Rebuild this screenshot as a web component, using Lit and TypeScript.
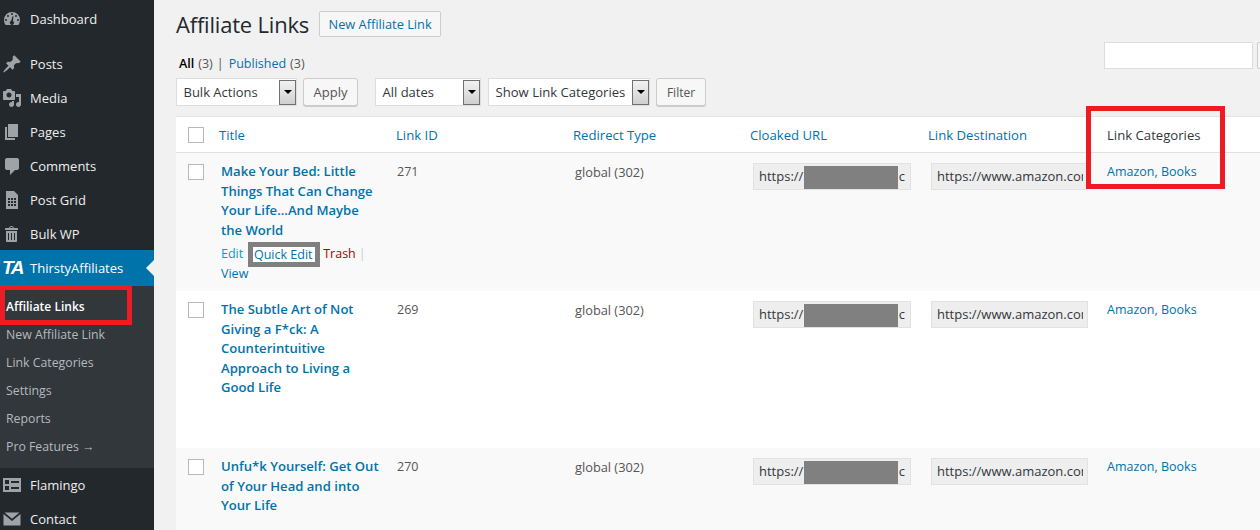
import { LitElement, html, css, svg } from "lit";
import { customElement } from "lit/decorators.js";

const icons: Record<string, unknown> = {
  dash: svg`<path fill-rule="evenodd" d="M3.76 16h12.48A7.97 7.97 0 0 0 18 11a8 8 0 0 0-16 0c0 1.9.66 3.64 1.76 5zM10 4a1 1 0 1 1 0 2 1 1 0 0 1 0-2zM6 6a1 1 0 1 1 0 2 1 1 0 0 1 0-2zm8 0a1 1 0 1 1 0 2 1 1 0 0 1 0-2zM4 10a1 1 0 1 1 0 2 1 1 0 0 1 0-2zm12 0a1 1 0 1 1 0 2 1 1 0 0 1 0-2zm-4.500-2.500L10.900 12.100a2 2 0 1 1-1.800-.1l1.400-4.800z"/>`,
  pin: svg`<path d="M10.44 3.02l1.82-1.82 6.36 6.35-1.83 1.82c-1.05-.68-2.48-.57-3.41.36l-.75.75c-.92.93-1.04 2.35-.35 3.41l-1.83 1.82-2.41-2.41-2.8 2.79c-.42.42-3.38 2.71-3.8 2.29s1.86-3.39 2.28-3.81l2.79-2.79L4.1 9.36l1.83-1.82c1.05.69 2.48.57 3.4-.36l.75-.75c.93-.92 1.05-2.35.36-3.41z"/>`,
  media: svg`<path fill-rule="evenodd" d="M13 11V4c0-.55-.45-1-1-1h-1.670L9 1H5L3.670 3H2c-.55 0-1 .45-1 1v7c0 .55.45 1 1 1h10c.55 0 1-.45 1-1zM7 4.500c1.380 0 2.500 1.120 2.500 2.500S8.380 9.500 7 9.500 4.500 8.380 4.500 7 5.620 4.500 7 4.500z"/><path d="M14 6h5v10.500c0 1.380-1.120 2.500-2.500 2.500S14 17.880 14 16.500s1.120-2.500 2.500-2.500c.17 0 .34.02.5.050V9h-3V6zm-4 8.050V13h2v3.500c0 1.380-1.120 2.500-2.500 2.500S7 17.880 7 16.500 8.120 14 9.500 14c.17 0 .34.02.5.050z"/>`,
  pages: svg`<path d="M6 15V2h10v13H6zm-1 1h8v2H3V5h2v11z"/>`,
  comment: svg`<path d="M5 2h10c1.100 0 2 .9 2 2v8c0 1.100-.9 2-2 2h-2l-5 5v-5H5c-1.100 0-2-.9-2-2V4c0-1.100.9-2 2-2z"/>`,
  grid: svg`<path fill-rule="evenodd" d="M4 1h8l4 4v14H4V1zm2 7v2h2V8H6zm3 0v2h2V8H9zm3 0v2h2V8h-2zm-6 3v2h2v-2H6zm3 0v2h2v-2H9zm3 0v2h2v-2h-2zm-6 3v2h2v-2H6zm3 0v2h2v-2H9zm3 0v2h2v-2h-2z"/>`,
  trash: svg`<path fill-rule="evenodd" d="M12 4h3c.6 0 1 .4 1 1v1H3V5c0-.6.5-1 1-1h3c.2-1.100 1.300-2 2.500-2s2.300.9 2.500 2zM8 4h3c-.2-.6-.9-1-1.500-1S8.200 3.400 8 4zM4 7h11v10c0 .6-.4 1-1 1H5c-.5 0-1-.4-1-1V7zm2 2v7h1V9H6zm3 0v7h1V9H9zm3 0v7h1V9h-1z"/>`,
  flamingo: svg`<path fill-rule="evenodd" d="M1 3h18v14H1V3zm2 2v4h4V5H3zm6 1v2h8V6H9zm-6 5v4h4v-4H3zm6 1v2h8v-2H9z"/>`,
  mail: svg`<path d="M2.500 3.500h15L10 9.800z"/><path d="M1.500 5l8.500 7 8.500-7v11.500h-17z"/>`,
};

const menuTop = [
  { t: "Posts", i: "pin" },
  { t: "Media", i: "media" },
  { t: "Pages", i: "pages" },
  { t: "Comments", i: "comment" },
  { t: "Post Grid", i: "grid" },
  { t: "Bulk WP", i: "trash" },
];
const subs = ["New Affiliate Link", "Link Categories", "Settings", "Reports", "Pro Features →"];

const rows = [
  { lines: ["Make Your Bed: Little", "Things That Can Change", "Your Life...And Maybe", "the World"], id: "271", actions: true, cls: "r1" },
  { lines: ["The Subtle Art of Not", "Giving a F*ck: A", "Counterintuitive", "Approach to Living a", "Good Life"], id: "269", actions: false, cls: "r2" },
  { lines: ["Unfu*k Yourself: Get Out", "of Your Head and into", "Your Life"], id: "270", actions: false, cls: "r3" },
];

@customElement("app-root")
export class AppRoot extends LitElement {
  static styles = css`
    :host { display: block; width: 1260px; height: 530px; overflow: hidden; position: relative; background: #f1f1f1;
      font-family: "Open Sans", sans-serif; font-size: 13px; color: #444; }
    * { box-sizing: border-box; }
    .page { display: flex; height: 530px; }
    .side { width: 154px; flex: none; background: #23282d; color: #eee; padding-top: 2px; overflow: hidden; }
    .item { height: 34px; display: flex; align-items: center; padding-left: 2px; gap: 8px; color: #eee; font-size: 13px; }
    .item svg { width: 20px; height: 20px; fill: #9ea3a8; flex: none; }
    .item.first { margin-bottom: 11px; }
    .active { height: 36px; background: #0073aa; color: #fff; display: flex; align-items: center; padding-left: 2px; gap: 7px; position: relative; margin-top: -1px; }
    .logo { font: italic bold 19px "Liberation Sans", sans-serif; width: 21px; letter-spacing: -1.500px; color: #fff; }
    .notch { position: absolute; right: 0; top: 10px; width: 0; height: 0; border: 8px solid transparent; border-right-color: #f1f1f1; border-left-width: 0; }
    .sub { background: #32373c; padding: 7px 0 7px; height: 182px; }
    .sub div { height: 28px; line-height: 28px; padding-left: 6px; font-size: 12.300px; color: #b4b9be; }
    .sub .cur { color: #fff; font-weight: 600; font-size: 12px; }
    .main { flex: 1; min-width: 0; padding: 0 0 0 22px; overflow: hidden; }
    .head { display: flex; align-items: center; gap: 10px; height: 48px; }
    h1 { margin: 0; font-size: 22px; font-weight: 400; color: #23282d; letter-spacing: -0.200px; }
    .add { height: 26px; width: 122px; justify-content: center; border: 1px solid #ccc; border-radius: 2px; background: #f7f7f7; color: #0073aa; font-size: 12.800px; font-weight: 500; display: flex; align-items: center; white-space: nowrap; }
    .views { height: 30px; display: flex; align-items: center; font-size: 12.500px; gap: 4px; color: #555; padding-left: 3px; }
    .views b { color: #000; font-weight: 600; }
    .views a { color: #0073aa; }
    .vsep { margin-right: 1px; }
    .search { position: absolute; left: 1104px; top: 42px; width: 149px; height: 27px; background: #fff; border: 1px solid #ddd; }
    .search2 { position: absolute; left: 1257px; top: 42px; width: 20px; height: 27px; background: #f7f7f7; border: 1px solid #ccc; border-radius: 2px; }
    .tools { display: flex; height: 28px; margin-bottom: 10px; }
    .sel { height: 28px; background: #fff; border: 1px solid #ddd; display: flex; align-items: center; justify-content: space-between; padding: 0 0 0 6.500px; font-size: 13px; color: #32373c; }
    .arrow { width: 17px; height: 25px; border: 1px solid #707070; background: linear-gradient(#f2f2f2, #cfcfcf); display: flex; align-items: center; justify-content: center; }
    .arrow i { width: 0; height: 0; border: 4px solid transparent; border-top: 4px solid #000; border-bottom: 0; }
    .btn { height: 28px; background: #f7f7f7; border: 1px solid #ccc; border-radius: 3px; box-shadow: 0 1px 0 #ccc; color: #555; display: flex; align-items: center; justify-content: center; font-size: 13px; }
    .b1 { width: 121px; margin-right: 6px; }
    .a1 { width: 55px; margin-right: 17px; }
    .b2 { width: 106px; margin-right: 7px; }
    .b3 { width: 162px; margin-right: 6px; white-space: nowrap; font-size: 13.100px; }
    .a2 { width: 50px; font-size: 12px; }
    .table { width: 1084px; background: #fff; border-top: 1px solid #e5e5e5; }
    .grid { display: grid; grid-template-columns: 43px 177px 177px 177px 178px 179px 1fr; }
    .thead { height: 36px; border-bottom: 1px solid #e1e1e1; align-items: center; color: #0073aa; font-size: 13.150px; }
    .thead .plain { color: #32373c; }
    .cb { width: 16px; height: 16px; border: 1px solid #b4b9be; background: #fff; margin-left: 12px; }
    .row { align-items: start; font-size: 12.500px; color: #555; }
    .r1 { height: 138px; background: #f9f9f9; }
    .r2 { height: 157px; background: #fff; }
    .r3 { height: 100px; background: #f9f9f9; }
    .row > * { margin-top: 10px; }
    .row .cb { margin-top: 11px; }
    .row .title { margin-top: 9px; padding-left: 2px; color: #0073aa; font-weight: 600; font-size: 13.100px; line-height: 19.500px; white-space: nowrap; }
    .rowact { margin-top: 4px; font-weight: 400; font-size: 12.500px; line-height: 19px; color: #ccc; }
    .edit { color: #00a0d2; }
    .qe { display: inline-block; width: 72px; height: 25px; margin: -3px 0 -3px 5px; border: 5px solid #808080; background: #fff; color: #0073aa; text-align: center; line-height: 15px; vertical-align: middle; padding-right: 2px; }
    .rowact .tr { color: #a00; margin: 0 3px; }
    .view { color: #0073aa; }
    .id { padding-left: 1px; }
    .rt { padding-left: 2px; font-size: 12.800px; }
    .inp { display: block; width: 158px; height: 27px; margin-left: 3px; background: #eee; border: 1px solid #e2e2e2; padding: 0 0 0 5px; line-height: 25px; font-size: 13px; color: #32373c; white-space: nowrap; position: relative; }
    .inp2 { width: 157px; }
    .clip { display: block; width: 146px; overflow: hidden; }
    .mask { position: absolute; left: 50px; top: 2px; width: 94px; height: 23px; background: #808080; }
    .tail { position: absolute; right: 5px; top: 0; }
    .cat { color: #0073aa; }
    .red { position: absolute; border: 5px solid #ed1c24; pointer-events: none; }
  `;

  render() {
    return html`
      <div class="page">
        <nav class="side">
          <div class="item first"><svg viewBox="0 0 20 20">${icons.dash}</svg>Dashboard</div>
          ${menuTop.map((m) => html`<div class="item"><svg viewBox="0 0 20 20">${icons[m.i]}</svg>${m.t}</div>`)}
          <div class="active"><span class="logo">TA</span>ThirstyAffiliates<span class="notch"></span></div>
          <div class="sub">
            <div class="cur">Affiliate Links</div>
            ${subs.map((s) => html`<div>${s}</div>`)}
          </div>
          <div class="item"><svg viewBox="0 0 20 20">${icons.flamingo}</svg>Flamingo</div>
          <div class="item"><svg viewBox="0 0 20 20">${icons.mail}</svg>Contact</div>
        </nav>
        <main class="main">
          <div class="head"><h1>Affiliate Links</h1><span class="add">New Affiliate Link</span></div>
          <div class="views"><b>All</b> (3) <span class="vsep">|</span> <a>Published</a> (3)</div>
          <div class="tools">
            <div class="sel b1">Bulk Actions<span class="arrow"><i></i></span></div>
            <div class="btn a1">Apply</div>
            <div class="sel b2">All dates<span class="arrow"><i></i></span></div>
            <div class="sel b3">Show Link Categories<span class="arrow"><i></i></span></div>
            <div class="btn a2">Filter</div>
          </div>
          <div class="table">
            <div class="grid thead">
              <div class="cb"></div><div>Title</div><div>Link ID</div><div>Redirect Type</div><div>Cloaked URL</div><div>Link Destination</div><div class="plain">Link Categories</div>
            </div>
            ${rows.map((r) => html`
              <div class="grid row ${r.cls}">
                <div class="cb"></div>
                <div class="title">
                  ${r.lines.map((l) => html`<div>${l}</div>`)}
                  ${r.actions ? html`<div class="rowact"><span class="edit">Edit</span><span class="qe">Quick Edit</span><span class="tr">Trash</span>|<br /><span class="view">View</span></div>` : ""}
                </div>
                <div class="id">${r.id}</div>
                <div class="rt">global (302)</div>
                <div><span class="inp">https://<span class="mask"></span><span class="tail">c</span></span></div>
                <div><span class="inp inp2"><span class="clip">https://www.amazon.com</span></span></div>
                <div class="cat">Amazon, Books</div>
              </div>`)}
          </div>
        </main>
      </div>
      <div class="search"></div><div class="search2"></div>
      <div class="red" style="left:0;top:285px;width:132px;height:40px"></div>
      <div class="red" style="left:1086px;top:106px;width:139px;height:83px"></div>
    `;
  }
}
